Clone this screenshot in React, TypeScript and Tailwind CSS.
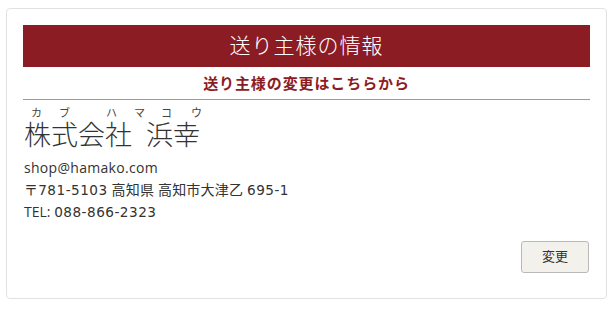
const ruby = [
  { ch: "カ", ml: "ml-[8px]" },
  { ch: "ブ", ml: "ml-[17px]" },
  { ch: "ハ", ml: "ml-[36px]" },
  { ch: "マ", ml: "ml-[17px]" },
  { ch: "コ", ml: "ml-[16px]" },
  { ch: "ウ", ml: "ml-[19px]" },
];

const num = "font-['DejaVu_Sans'] text-[13.6px] tracking-[0.5px]";

export default function App() {
  return (
    <div
      className="w-[613px] h-[309px] bg-white px-[6px] pt-[8px]"
      style={{ fontFamily: '"Open Sans", "Noto Sans CJK JP", sans-serif' }}
    >
      <div className="h-[291px] border border-[#e2e2e2] rounded-[4px] px-[16px] pt-[16px]">
        <div className="h-[42px] bg-[#8c1c23] flex items-center justify-center text-white text-[21px] font-light tracking-[1px]">
          送り主様の情報
        </div>
        <div className="h-[33px] border-b border-[#9a9a9a] flex items-center justify-center">
          <a className="text-[15px] font-bold text-[#8c1c23] tracking-[0.9px] pt-[1px]">
            送り主様の変更はこちらから
          </a>
        </div>
        <div className="flex h-[19px] items-end text-[11px] leading-none text-[#444] pb-[1px]">
          {ruby.map((r) => (
            <span key={r.ch} className={`w-[11px] ${r.ml}`}>
              {r.ch}
            </span>
          ))}
        </div>
        <div className="flex text-[27px] leading-[32px] font-light text-[#333] pl-[1px]">
          <span>株式会社</span>
          <span className="w-[14px]" />
          <span>浜幸</span>
        </div>
        <div className="mt-[6px] text-[14px] leading-[22px] text-[#333] pl-[1px]">
          <div className="tracking-[0.3px]">shop@hamako.com</div>
          <div className="tracking-[0.2px]">
            〒<span className={num}>781-5103</span> 高知県 高知市大津乙{" "}
            <span className={num}>695-1</span>
          </div>
          <div>
            TEL: <span className={num}>088-866-2323</span>
          </div>
        </div>
        <div className="flex justify-end mt-[18px]">
          <button className="w-[68px] h-[32px] mr-[1px] bg-[#f3f1ec] border border-[#b9b9b9] rounded-[3px] text-[13px] text-[#333]">
            変更
          </button>
        </div>
      </div>
    </div>
  );
}
